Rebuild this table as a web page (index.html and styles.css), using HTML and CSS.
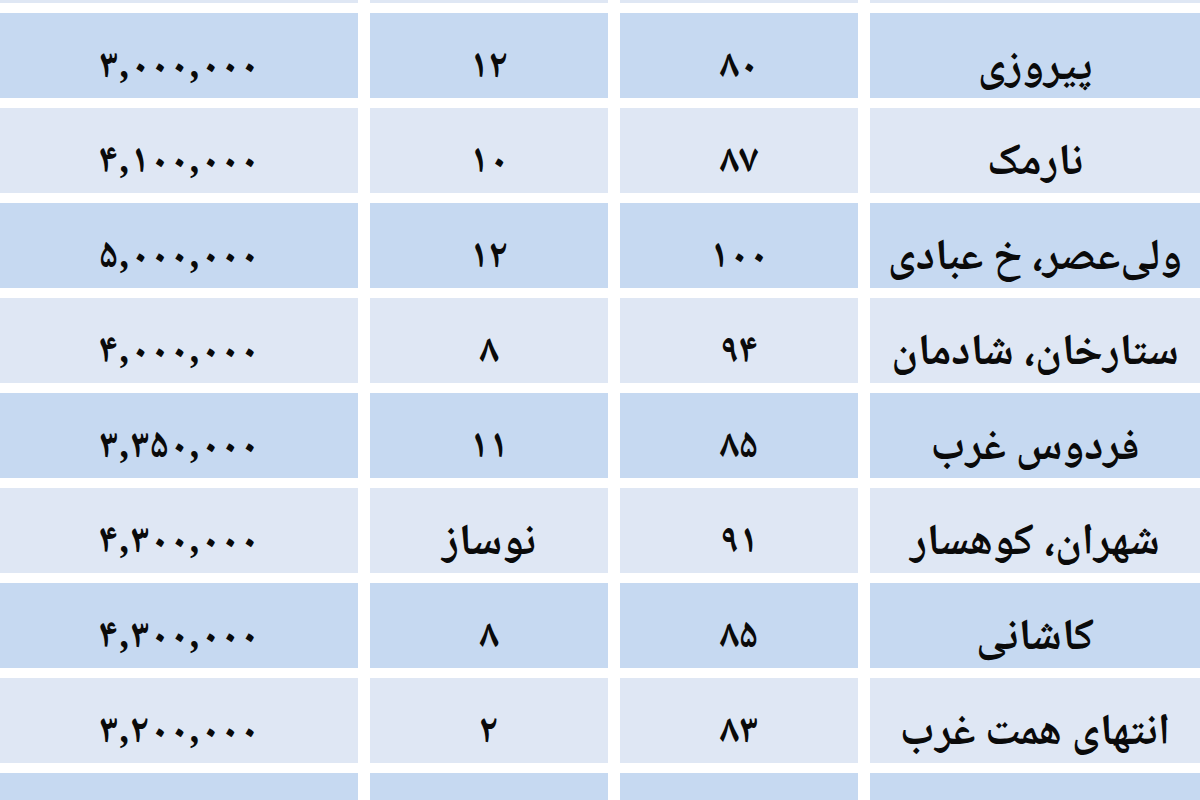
FILE: index.html
```html
<!DOCTYPE html>
<html lang="fa" dir="rtl">
<head>
<meta charset="utf-8">
<title>جدول اجاره</title>
<link rel="stylesheet" href="styles.css">
</head>
<body>
<div class="table">
  <div class="row light partial"><div class="cell"></div><div class="cell"></div><div class="cell"></div><div class="cell"></div></div>
  <div class="row dark"><div class="cell name">پیروزی</div><div class="cell num">۸۰</div><div class="cell num">۱۲</div><div class="cell num price">۳,۰۰۰,۰۰۰</div></div>
  <div class="row light"><div class="cell name">نارمک</div><div class="cell num">۸۷</div><div class="cell num">۱۰</div><div class="cell num price">۴,۱۰۰,۰۰۰</div></div>
  <div class="row dark"><div class="cell name">ولی‌عصر، خ عبادی</div><div class="cell num">۱۰۰</div><div class="cell num">۱۲</div><div class="cell num price">۵,۰۰۰,۰۰۰</div></div>
  <div class="row light"><div class="cell name">ستارخان، شادمان</div><div class="cell num">۹۴</div><div class="cell num">۸</div><div class="cell num price">۴,۰۰۰,۰۰۰</div></div>
  <div class="row dark"><div class="cell name">فردوس غرب</div><div class="cell num">۸۵</div><div class="cell num">۱۱</div><div class="cell num price">۳,۳۵۰,۰۰۰</div></div>
  <div class="row light"><div class="cell name">شهران، کوهسار</div><div class="cell num">۹۱</div><div class="cell name">نوساز</div><div class="cell num price">۴,۳۰۰,۰۰۰</div></div>
  <div class="row dark"><div class="cell name">کاشانی</div><div class="cell num">۸۵</div><div class="cell num">۸</div><div class="cell num price">۴,۳۰۰,۰۰۰</div></div>
  <div class="row light"><div class="cell name">انتهای همت غرب</div><div class="cell num">۸۳</div><div class="cell num">۲</div><div class="cell num price">۳,۲۰۰,۰۰۰</div></div>
  <div class="row dark"><div class="cell"></div><div class="cell"></div><div class="cell"></div><div class="cell"></div></div>
</div>
</body>
</html>
```

FILE: styles.css
```css
html, body {
  margin: 0;
  padding: 0;
  background: #ffffff;
}
body {
  width: 1200px;
  height: 800px;
  overflow: hidden;
  font-family: "Noto Naskh Arabic", "DejaVu Sans", sans-serif;
  font-weight: bold;
  color: #0a0a0a;
}
.table {
  display: flex;
  flex-direction: column;
  gap: 10px;
}
.row {
  display: grid;
  grid-template-columns: 330px 238px 238px 358px;
  column-gap: 12px;
  height: 85px;
}
.row.partial {
  height: 3px;
  overflow: hidden;
}
.cell {
  display: flex;
  align-items: flex-end;
  justify-content: center;
  line-height: 1.25;
  white-space: nowrap;
  box-sizing: border-box;
}
.name {
  font-size: 44px;
  padding-bottom: 1px;
}
.num {
  font-size: 40px;
  padding-bottom: 5px;
}
.row.partial .cell {
  padding: 0;
}
.dark .cell {
  background: #c6d9f1;
}
.light .cell {
  background: #dfe7f4;
}
.price {
  direction: ltr;
}
```
